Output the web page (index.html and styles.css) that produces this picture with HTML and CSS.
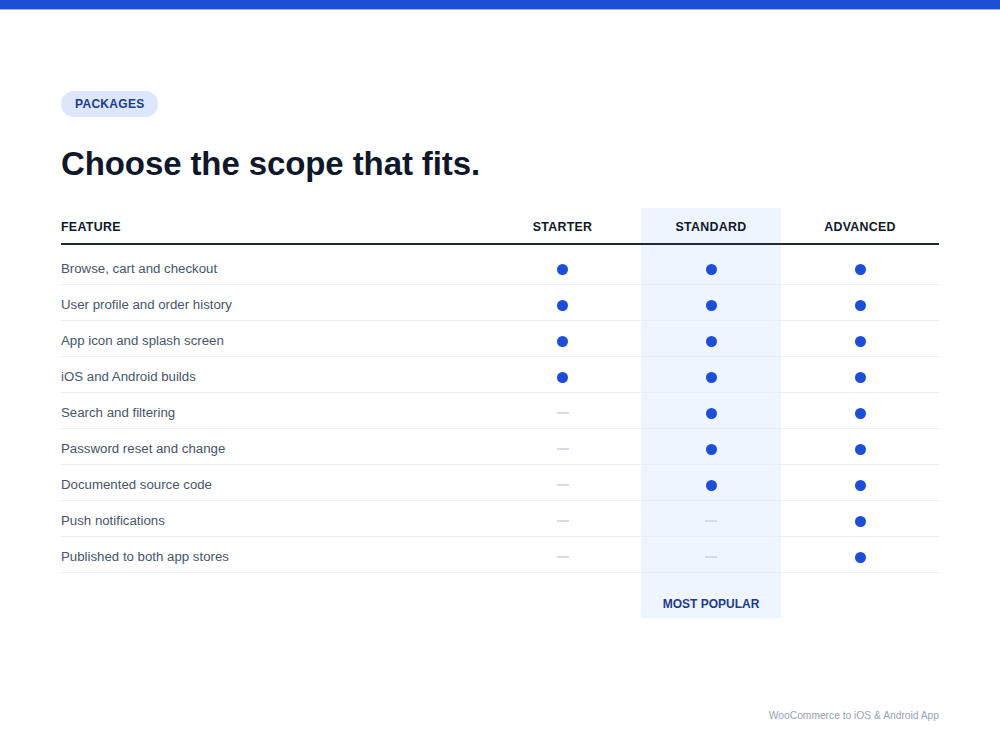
FILE: index.html
```html
<!DOCTYPE html>
<html lang="en">
<head>
<meta charset="utf-8">
<title>Packages</title>
<link rel="stylesheet" href="styles.css">
</head>
<body>
<div class="topbar"></div>
<main class="page">
  <span class="badge">PACKAGES</span>
  <h1 class="title">Choose the scope that fits.</h1>
  <table class="compare">
    <colgroup>
      <col class="c-feature">
      <col class="c-starter">
      <col class="c-standard">
      <col class="c-advanced">
    </colgroup>
    <thead>
      <tr>
        <th class="feat">FEATURE</th>
        <th>STARTER</th>
        <th class="hl">STANDARD</th>
        <th>ADVANCED</th>
      </tr>
    </thead>
    <tbody>
      <tr class="first"><td class="feat">Browse, cart and checkout</td><td><span class="dot"></span></td><td class="hl"><span class="dot"></span></td><td><span class="dot"></span></td></tr>
      <tr><td class="feat">User profile and order history</td><td><span class="dot"></span></td><td class="hl"><span class="dot"></span></td><td><span class="dot"></span></td></tr>
      <tr><td class="feat">App icon and splash screen</td><td><span class="dot"></span></td><td class="hl"><span class="dot"></span></td><td><span class="dot"></span></td></tr>
      <tr><td class="feat">iOS and Android builds</td><td><span class="dot"></span></td><td class="hl"><span class="dot"></span></td><td><span class="dot"></span></td></tr>
      <tr><td class="feat">Search and filtering</td><td><span class="dash"></span></td><td class="hl"><span class="dot"></span></td><td><span class="dot"></span></td></tr>
      <tr><td class="feat">Password reset and change</td><td><span class="dash"></span></td><td class="hl"><span class="dot"></span></td><td><span class="dot"></span></td></tr>
      <tr><td class="feat">Documented source code</td><td><span class="dash"></span></td><td class="hl"><span class="dot"></span></td><td><span class="dot"></span></td></tr>
      <tr><td class="feat">Push notifications</td><td><span class="dash"></span></td><td class="hl"><span class="dash"></span></td><td><span class="dot"></span></td></tr>
      <tr><td class="feat">Published to both app stores</td><td><span class="dash"></span></td><td class="hl"><span class="dash"></span></td><td><span class="dot"></span></td></tr>
    </tbody>
    <tfoot>
      <tr><td></td><td></td><td class="hl popular">MOST POPULAR</td><td></td></tr>
    </tfoot>
  </table>
  <footer class="credit">WooCommerce to iOS &amp; Android App</footer>
</main>
</body>
</html>
```

FILE: styles.css
```css
* { box-sizing: border-box; }
html, body {
  margin: 0;
  padding: 0;
  background: #ffffff;
  font-family: "Liberation Sans", Arial, Helvetica, sans-serif;
}
.topbar {
  height: 10px;
  background: #1d4ed8;
  border-bottom: 1px solid #9db6f3;
}
.page {
  width: 878px;
  margin: 0 0 0 61px;
  padding-top: 81px;
  display: flex;
  flex-direction: column;
  align-items: flex-start;
}
.badge {
  display: inline-block;
  height: 26px;
  line-height: 26px;
  padding: 0 13px 0 14px;
  border-radius: 13px;
  background: #dce7fd;
  color: #1e3a8a;
  font-size: 12px;
  font-weight: 700;
  letter-spacing: 0.3px;
}
.title {
  margin: 27px 0 24px;
  font-size: 33px;
  line-height: 40px;
  font-weight: 700;
  color: #0f172a;
  letter-spacing: -0.1px;
}
.compare {
  width: 878px;
  border-collapse: separate;
  border-spacing: 0;
  table-layout: fixed;
}
.c-starter { width: 157px; }
.c-standard { width: 140px; }
.c-advanced { width: 158px; }
.compare th {
  height: 37px;
  padding: 3px 0 0;
  font-size: 12.4px;
  font-weight: 700;
  letter-spacing: 0.3px;
  color: #0f172a;
  text-align: center;
  vertical-align: middle;
  border-bottom: 2px solid #1e293b;
}
.compare th.feat { text-align: left; }
.compare tbody td {
  height: 36px;
  padding: 4px 0 0;
  font-size: 13.25px;
  color: #475569;
  text-align: center;
  vertical-align: middle;
  border-bottom: 1px solid #e9eef4;
  line-height: 16px;
}
.compare tbody tr.first td {
  height: 40px;
  padding-top: 8px;
}
.compare tbody td.feat { text-align: left; }
.hl { background: #eff5ff; }
.dot {
  display: inline-block;
  width: 11px;
  height: 11px;
  border-radius: 50%;
  background: #1d4ed8;
  vertical-align: middle;
}
.dash {
  display: inline-block;
  width: 12px;
  height: 2px;
  background: #d3dce8;
  vertical-align: middle;
}
.compare tfoot td {
  height: 45px;
  padding: 23px 0 6px;
  line-height: 16px;
  text-align: center;
}
.popular {
  font-size: 12px;
  font-weight: 700;
  color: #1e3a8a;
}
.credit {
  align-self: flex-end;
  margin-top: 91px;
  font-size: 10.25px;
  line-height: 14px;
  color: #94a3b8;
}
```
